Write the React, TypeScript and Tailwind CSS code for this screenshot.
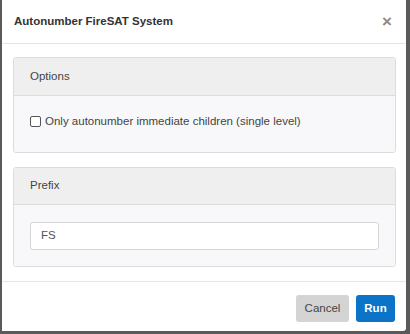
import React from "react";

export default function App() {
  return (
    <div className="w-[410px] h-[334px] bg-[#5a5a5a] overflow-hidden" style={{ fontFamily: '"Liberation Sans", Arial, sans-serif' }}>
      <div className="ml-[2px] w-[404px] h-[331px] bg-white flex flex-col rounded-br-[3px]">
        <div className="h-[44px] border-b border-[#e5e5e5] flex items-center justify-between pl-[12px] pr-[14px] shrink-0">
          <span className="text-[11.5px] font-bold text-[#333]">Autonumber FireSAT System</span>
          <span className="text-[17px] font-bold text-[#8a8a8a] leading-none">×</span>
        </div>
        <div className="pt-[13px] pb-[14px] pl-[11px] pr-[10px] flex flex-col gap-[14px] border-b border-[#e5e5e5]">
          <div className="border border-[#dcdcdc] rounded-[3px] overflow-hidden">
            <div className="h-[38px] bg-[#efefef] border-b border-[#dcdcdc] flex items-center px-[16px] text-[11.5px] text-[#444]">Options</div>
            <div className="h-[56px] bg-[#f8f8fa] flex items-start pt-[17px] px-[16px]">
              <label className="flex items-center gap-[4px] text-[11.5px] text-[#444]">
                <span className="w-[11px] h-[11px] border border-[#555] rounded-[2px] bg-white inline-block" />
                Only autonumber immediate children (single level)
              </label>
            </div>
          </div>
          <div className="border border-[#dcdcdc] rounded-[3px] overflow-hidden">
            <div className="h-[37px] bg-[#efefef] border-b border-[#dcdcdc] flex items-center px-[16px] text-[11.5px] text-[#444]">Prefix</div>
            <div className="bg-[#f8f8fa] pt-[17px] pb-[16px] px-[16px]">
              <div className="h-[28px] bg-white border border-[#d5d5d5] rounded-[3px] flex items-center px-[10px] text-[11.5px] text-[#555]">FS</div>
            </div>
          </div>
        </div>
        <div className="flex-1 flex items-start justify-end gap-[7px] pt-[13px] pr-[11px]">
          <button className="h-[27px] w-[53px] bg-[#d4d4d4] rounded-[3px] text-[11.5px] text-[#444]">Cancel</button>
          <button className="h-[27px] w-[39px] bg-[#0b74c8] rounded-[3px] text-[11.5px] text-white font-bold">Run</button>
        </div>
      </div>
    </div>
  );
}
